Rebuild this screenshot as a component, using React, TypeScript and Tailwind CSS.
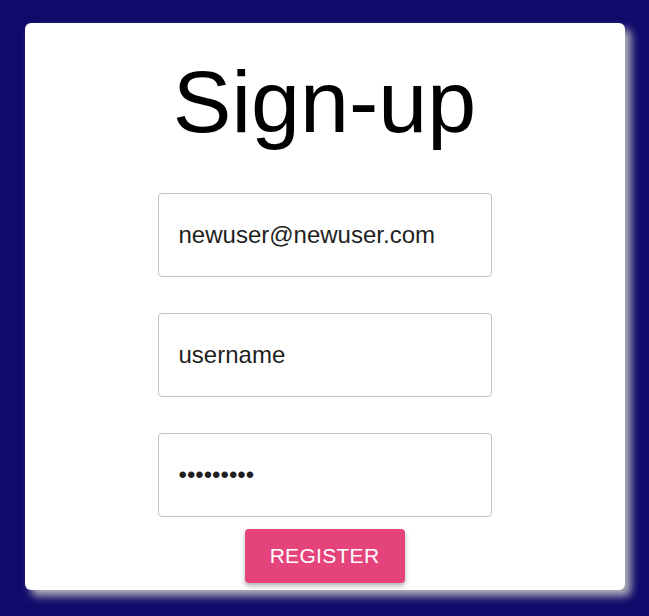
import React from "react";

const fieldClass =
  "h-[84px] w-[334px] rounded-[4px] border border-[#c4c4c4] bg-white px-5 text-[24px] text-[#1f1f1f] outline-none";

export default function App() {
  return (
    <div className="min-h-[616px] w-full bg-[#100a6b] pt-[23px] pb-[26px] font-['Liberation_Sans',Arial,sans-serif]">
      <div className="mx-auto flex h-[567px] w-[600px] flex-col items-center rounded-[6px] bg-white pt-[28px] shadow-[6px_6px_8px_#b4b4bc]">
        <h1 className="text-[88px] leading-[101px] text-black">Sign-up</h1>

        <form className="mt-[41px] flex flex-col items-center">
          <div className="flex flex-col gap-[36px]">
            <input
              className={fieldClass}
              type="email"
              defaultValue="newuser@newuser.com"
              readOnly
            />
            <input
              className={fieldClass}
              type="text"
              defaultValue="username"
              readOnly
            />
            <input
              className={fieldClass}
              type="password"
              defaultValue="123456789"
              readOnly
            />
          </div>
          <button
            type="button"
            className="mt-[12px] h-[54px] w-[160px] rounded-[4px] bg-[#e5437b] text-[21px] tracking-[0.3px] text-white shadow-[0_3px_5px_rgba(0,0,0,0.3)]"
          >
            REGISTER
          </button>
        </form>
      </div>
    </div>
  );
}
